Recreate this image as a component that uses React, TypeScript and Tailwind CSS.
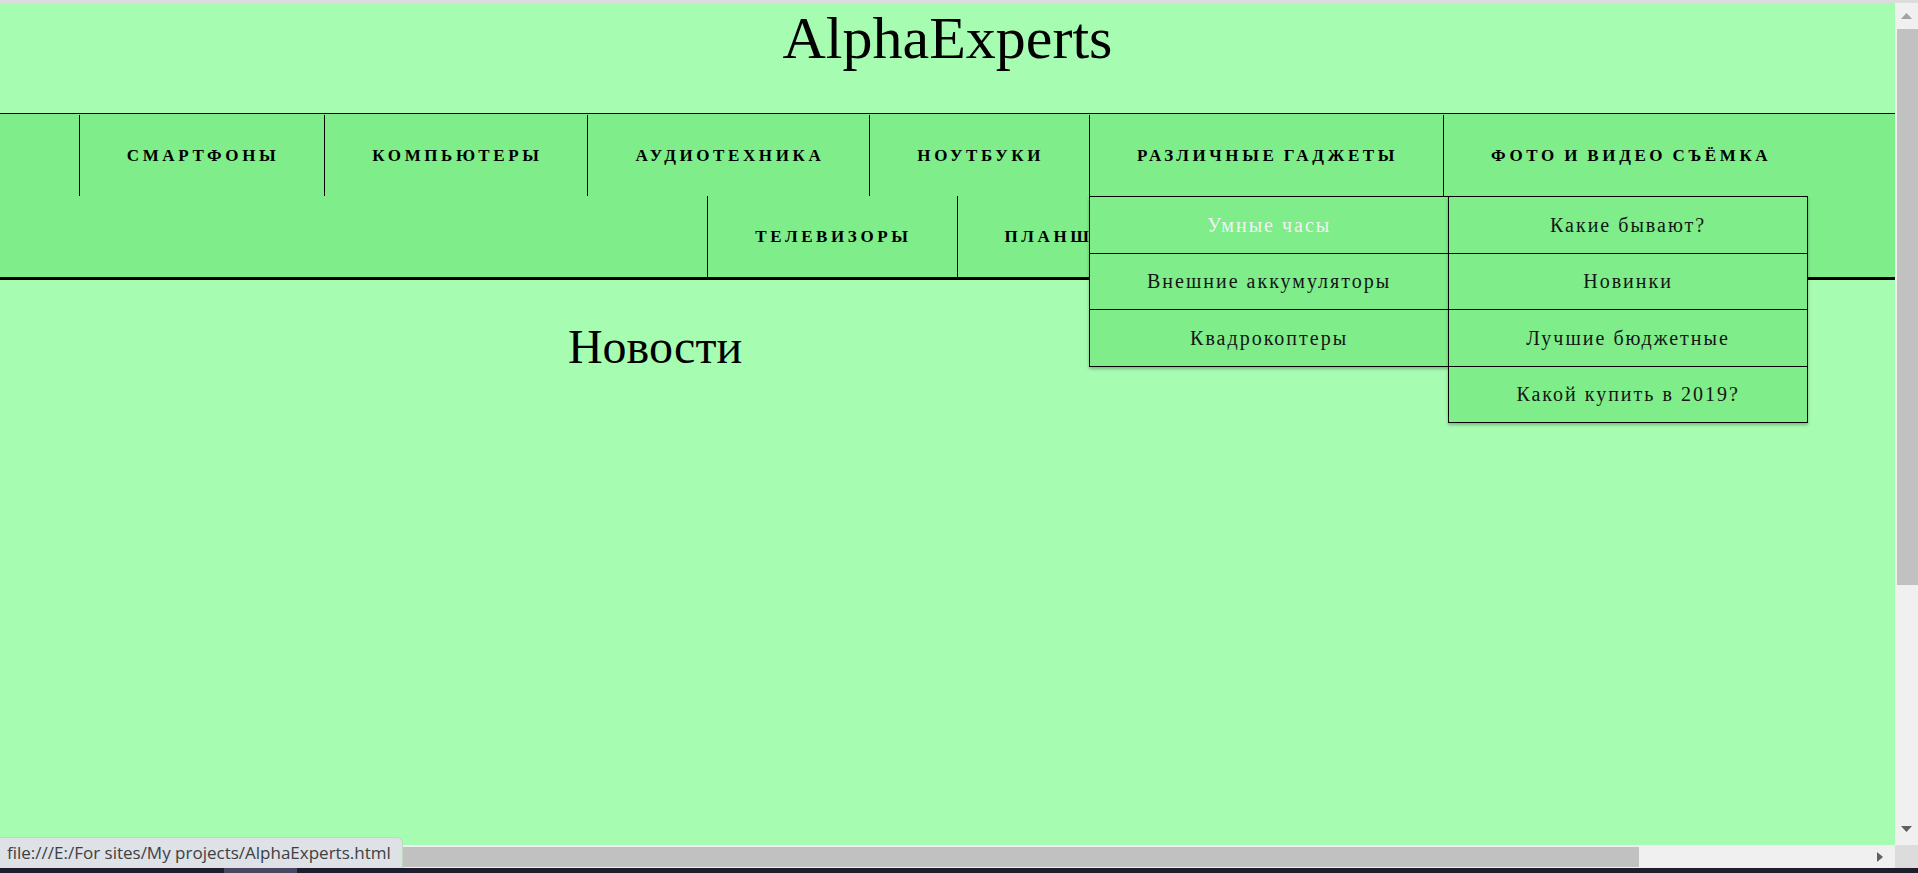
import clsx from 'clsx';
import type { ReactNode } from 'react';

const topItems = ['Смартфоны', 'Компьютеры', 'Аудиотехника', 'Ноутбуки', 'Различные гаджеты', 'Фото и видео съёмка'];
const bottomItems = ['Телевизоры', 'Планшеты'];
const gadgets = ['Умные часы', 'Внешние аккумуляторы', 'Квадрокоптеры'];
const photo = ['Какие бывают?', 'Новинки', 'Лучшие бюджетные', 'Какой купить в 2019?'];

interface DropdownProps {
	items: string[];
	active?: number;
	className?: string;
}

const Dropdown = ({ items, active, className }: DropdownProps) => (
	<div
		className={clsx(
			'absolute top-full z-10 w-[360px] border-x border-t border-black bg-[#7eed8a] font-normal normal-case tracking-[2px] [word-spacing:0] shadow-[0_2px_3px_rgba(0,0,0,0.25)]',
			className,
		)}
	>
		{items.map((item, index) => (
			<div
				key={item}
				className={clsx(
					'flex h-[56.5px] items-center justify-center border-b border-black text-[20px]',
					index === active ? 'text-[#f2f2f2]' : 'text-[#151515]',
				)}
			>
				{item}
			</div>
		))}
	</div>
);

const NavItem = ({ label, children }: { label: string; children?: ReactNode }) => (
	<div className="relative flex h-[81px] items-center whitespace-nowrap border-l border-black pl-[47px] pr-[45px] text-[17px] font-bold uppercase tracking-[3.6px] [word-spacing:-1.5px] text-black">
		{label}
		{children}
	</div>
);

const App = () => (
	<div className="relative flex h-[873px] w-full flex-col overflow-hidden bg-[#a6fcb1] font-['Liberation_Serif','Times_New_Roman',serif]">
		<div className="h-[3px] shrink-0 bg-[#dcdcdc]" />

		<div className="flex min-h-0 flex-1">
			<div className="flex-1">
				<header className="flex h-[110px] justify-center pt-[5px]">
					<h1 className="text-[60px] leading-none text-black">AlphaExperts</h1>
				</header>

				<nav className="border-t border-b-[3px] border-black bg-[#7eed8a] pt-px">
					<div className="flex justify-center">
						{topItems.map((label) => (
							<NavItem key={label} label={label}>
								{label === 'Различные гаджеты' && <Dropdown items={gadgets} active={0} className="left-[-1px]" />}
								{label === 'Фото и видео съёмка' && <Dropdown items={photo} className="left-[4px]" />}
							</NavItem>
						))}
					</div>
					<div className="flex justify-center">
						{bottomItems.map((label) => (
							<NavItem key={label} label={label} />
						))}
					</div>
				</nav>

				<div className="flex">
					<section className="w-[1310px] pt-[31px] text-center">
						<h2 className="text-[48px] text-black">Новости</h2>
					</section>
				</div>
			</div>

			{/* vertical scrollbar */}
			<div className="flex w-[23px] flex-col bg-[#f0f0f0]">
				<div className="flex h-[26px] items-center justify-center">
					<svg width="11" height="6" viewBox="0 0 11 6">
						<polygon points="0,6 5.5,0 11,6" fill="#a3a3a3" />
					</svg>
				</div>
				<div className="ml-[2px] h-[556px] bg-[#c1c1c1]" />
				<div className="flex-1" />
				<div className="flex h-[26px] items-center justify-center pb-[6px]">
					<svg width="11" height="6" viewBox="0 0 11 6">
						<polygon points="0,0 11,0 5.5,6" fill="#606060" />
					</svg>
				</div>
			</div>
		</div>

		{/* horizontal scrollbar */}
		<div className="flex h-[23px] shrink-0 bg-[#f0f0f0]">
			<div className="mt-[2px] mb-px h-[20px] w-[1639px] bg-[#c1c1c1]" />
			<div className="flex-1" />
			<div className="flex w-[23px] items-center justify-center pr-[8px]">
				<svg width="6" height="10" viewBox="0 0 6 10">
					<polygon points="0,0 6,5 0,10" fill="#606060" />
				</svg>
			</div>
			<div className="w-[23px] bg-[#dcdcdc]" />
		</div>

		<div className="flex h-[5px] shrink-0 bg-[#1f1d2b]">
			<div className="ml-[224px] w-[73px] bg-[#4a4760]" />
		</div>

		{/* status bubble */}
		<div className="absolute bottom-[5px] left-0 flex h-[31px] w-[403px] items-center rounded-tr-[6px] border-t border-r border-[#b9dcbf] bg-[#dee1e6] pl-[7px] font-['Open_Sans','Noto_Sans',sans-serif] text-[17px] text-[#3c4043]">
			file:///E:/For sites/My projects/AlphaExperts.html
		</div>
	</div>
);

export default App;
